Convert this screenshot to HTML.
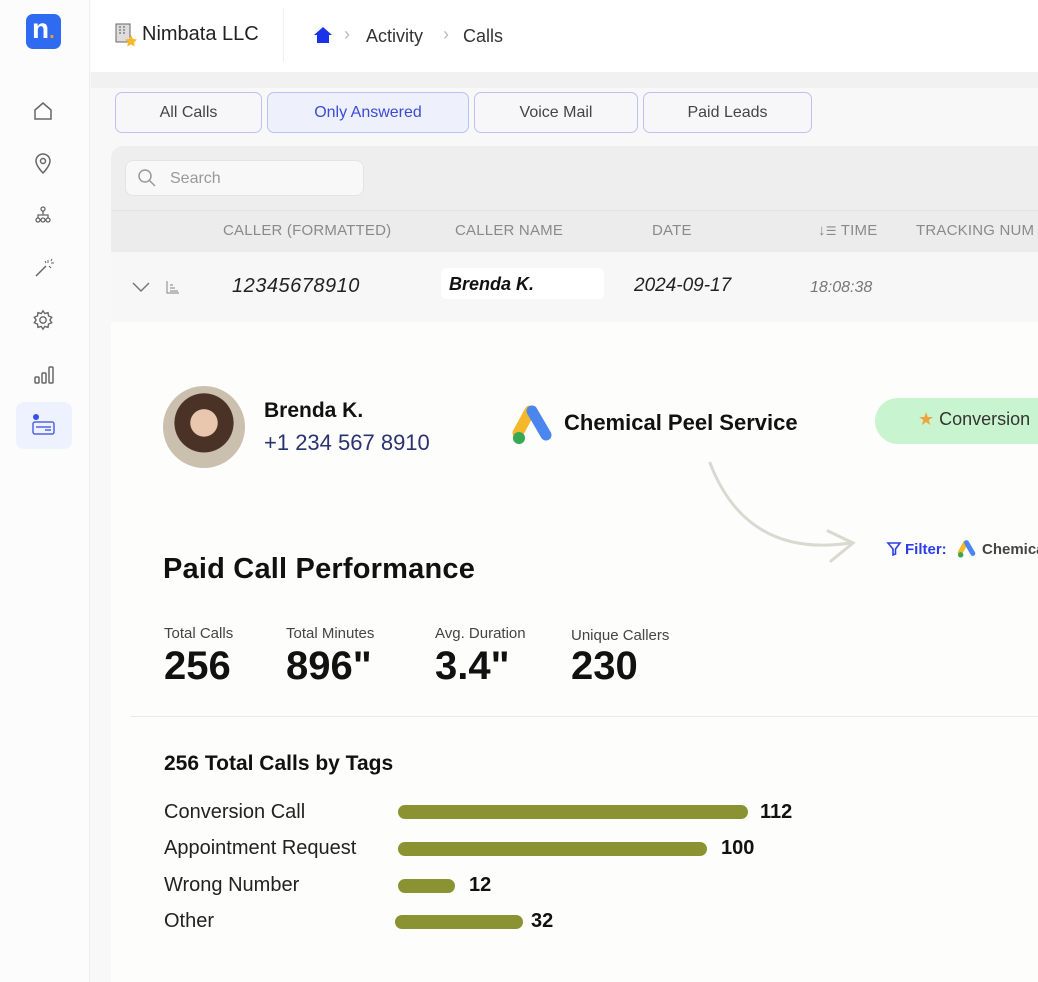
<!DOCTYPE html>
<html><head><meta charset="utf-8"><style>
*{margin:0;padding:0;box-sizing:border-box}
body{width:1038px;height:982px;overflow:hidden;background:#f8f8f8;font-family:"Liberation Sans",sans-serif;position:relative;color:#111}
.a{position:absolute;white-space:nowrap}
.tab{position:absolute;top:92px;height:41px;border:1.5px solid #b9c3ee;border-radius:7px;background:#f7f7f9;font-size:16px;color:#444;display:flex;align-items:center;justify-content:center}
.th{position:absolute;top:222px;font-size:15px;color:#8a8a8a;letter-spacing:.2px;white-space:nowrap}
.bar{position:absolute;height:14px;border-radius:7px;background:#8a9232}
.lbl{position:absolute;font-size:20px;color:#222;white-space:nowrap}
.num{position:absolute;font-size:20px;font-weight:bold;color:#111}
.sl{position:absolute;top:625px;font-size:15px;color:#444;white-space:nowrap}
.sv{position:absolute;top:644px;font-size:40px;font-weight:bold;color:#111}
svg.i{position:absolute}
</style></head><body>
<div class="a" style="left:0;top:0;width:90px;height:982px;background:#fcfcfc;border-right:1px solid #eee"></div>
<div class="a" style="left:26px;top:14px;width:35px;height:35px;background:#2f6bf0;border-radius:7px;color:#fff;font-weight:bold;font-size:28px;line-height:30px;padding-left:6px">n<span style="color:#f39a2b;font-size:20px">.</span></div>
<svg class="i" style="left:32px;top:100px" width="22" height="22" viewBox="0 0 22 22" fill="none" stroke="#666" stroke-width="1.5"><path d="M3 10L11 3l8 7v9H3z"/></svg>
<svg class="i" style="left:33px;top:151px" width="20" height="24" viewBox="0 0 20 24" fill="none" stroke="#666" stroke-width="1.5"><path d="M10 22s-7-7-7-12a7 7 0 0114 0c0 5-7 12-7 12z"/><circle cx="10" cy="10" r="2.5"/></svg>
<svg class="i" style="left:35px;top:206px" width="16" height="18" viewBox="0 0 16 18" fill="none" stroke="#666" stroke-width="1.3"><circle cx="8" cy="3" r="2"/><circle cx="3" cy="14" r="2"/><circle cx="8" cy="14" r="2"/><circle cx="13" cy="14" r="2"/><path d="M8 5v4M3 12V9h10v3"/></svg>
<svg class="i" style="left:33px;top:257px" width="22" height="22" viewBox="0 0 22 22" fill="none" stroke="#666" stroke-width="1.5"><path d="M3 19L13 9"/><path d="M15 3v3M18 6h3M16 9l2 2M12 4l1 2M19 2l-1 2" stroke-width="1"/></svg>
<svg class="i" style="left:32px;top:309px" width="22" height="22" viewBox="0 0 24 24" fill="none" stroke="#666" stroke-width="1.5"><circle cx="12" cy="12" r="3.5"/><path d="M12 2l2 3 3.5-1 .5 3.5 3.5 1.5-2 3 2 3-3.5 1.5-.5 3.5-3.5-1-2 3-2-3-3.5 1-.5-3.5L2.5 15l2-3-2-3L6 7.5 6.5 4 10 5z"/></svg>
<svg class="i" style="left:33px;top:363px" width="22" height="22" viewBox="0 0 22 22" fill="none" stroke="#666" stroke-width="1.5"><rect x="2" y="14" width="4" height="6" rx="1"/><rect x="9" y="10" width="4" height="10" rx="1"/><rect x="16" y="4" width="4" height="16" rx="1"/></svg>
<div class="a" style="left:16px;top:402px;width:56px;height:47px;background:#eef2fe;border-radius:8px"></div>
<svg class="i" style="left:31px;top:413px" width="26" height="24" viewBox="0 0 26 24" fill="none" stroke="#5062e8" stroke-width="1.5"><circle cx="5" cy="4" r="3" fill="#3c4fe6" stroke="none"/><rect x="2" y="9" width="21" height="12" rx="2"/><path d="M5 14h15M14 17h6"/></svg>
<div class="a" style="left:91px;top:0;width:947px;height:72px;background:#fff"></div>
<svg class="i" style="left:114px;top:23px" width="24" height="24" viewBox="0 0 24 24"><rect x="2" y="1" width="14" height="18" fill="#ddd" stroke="#666"/><path d="M5 4h2M9 4h2M5 7h2M9 7h2M5 10h2M9 10h2" stroke="#555"/><path d="M17 12l2 4 4 .5-3 3 .8 4-3.8-2-3.8 2 .8-4-3-3 4-.5z" fill="#f5b82e"/></svg>
<div class="a" style="left:142px;top:23px;font-size:20px;color:#222">Nimbata LLC</div>
<div class="a" style="left:283px;top:8px;width:1px;height:54px;background:#eee"></div>
<svg class="i" style="left:313px;top:26px" width="20" height="18" viewBox="0 0 20 18"><path d="M10 1L1 9h3v8h12V9h3z" fill="#1a32e8"/></svg>
<div class="a" style="left:344px;top:24px;font-size:18px;color:#bbb">›</div>
<div class="a" style="left:366px;top:26px;font-size:18px;color:#333">Activity</div>
<div class="a" style="left:443px;top:24px;font-size:18px;color:#bbb">›</div>
<div class="a" style="left:463px;top:26px;font-size:18px;color:#333">Calls</div>
<div class="a" style="left:91px;top:72px;width:947px;height:16px;background:#f1f1f1"></div>
<div class="tab" style="left:115px;width:147px">All Calls</div>
<div class="tab" style="left:267px;width:202px;background:#eef1fb;color:#3a4bd6">Only Answered</div>
<div class="tab" style="left:474px;width:164px">Voice Mail</div>
<div class="tab" style="left:643px;width:169px">Paid Leads</div>
<div class="a" style="left:111px;top:146px;width:927px;height:64px;background:#eeeeee;border-radius:12px 0 0 0"></div>
<div class="a" style="left:125px;top:160px;width:239px;height:36px;background:#f8f8f8;border:1px solid #e4e4e4;border-radius:8px"></div>
<svg class="i" style="left:137px;top:168px" width="20" height="20" viewBox="0 0 20 20" fill="none" stroke="#999" stroke-width="1.5"><circle cx="8" cy="8" r="6"/><path d="M12.5 12.5L18 18"/></svg>
<div class="a" style="left:170px;top:170px;font-size:16px;color:#999">Search</div>
<div class="a" style="left:111px;top:210px;width:927px;height:42px;background:#ececec;border-top:1px solid #e2e2e2"></div>
<div class="th" style="left:223px">CALLER (FORMATTED)</div>
<div class="th" style="left:455px">CALLER NAME</div>
<div class="th" style="left:652px">DATE</div>
<div class="th" style="left:818px">↓<span style="font-size:12px">☰</span> TIME</div>
<div class="th" style="left:916px">TRACKING NUM</div>
<div class="a" style="left:111px;top:252px;width:927px;height:70px;background:#f7f7f7"></div>
<svg class="i" style="left:131px;top:281px" width="20" height="12" viewBox="0 0 20 12" fill="none" stroke="#777" stroke-width="1.5"><path d="M2 2l8 8 8-8"/></svg>
<svg class="i" style="left:165px;top:279px" width="16" height="16" viewBox="0 0 16 16" fill="none" stroke="#999" stroke-width="1.2"><path d="M2 2v12h12M5 6h3M5 9h5M5 12h8"/></svg>
<div class="a" style="left:232px;top:275px;font-size:20px;font-style:italic;color:#222;letter-spacing:.5px">12345678910</div>
<div class="a" style="left:441px;top:268px;width:163px;height:31px;background:#fff;border-radius:5px"></div>
<div class="a" style="left:449px;top:274px;font-size:18px;font-style:italic;font-weight:bold;color:#111">Brenda K.</div>
<div class="a" style="left:634px;top:275px;font-size:19px;font-style:italic;color:#222">2024-09-17</div>
<div class="a" style="left:810px;top:279px;font-size:16px;font-style:italic;color:#777">18:08:38</div>
<div class="a" style="left:111px;top:322px;width:927px;height:660px;background:#fdfdfc"></div>
<div class="a" style="left:163px;top:386px;width:82px;height:82px;border-radius:50%;background:radial-gradient(circle at 50% 45%,#e9c7ae 0 22%,#4a3226 23% 48%,#cbbfae 49%)"></div>
<div class="a" style="left:264px;top:399px;font-size:21px;font-weight:bold;color:#111">Brenda K.</div>
<div class="a" style="left:264px;top:430px;font-size:22px;color:#2a3270">+1 234 567 8910</div>
<svg class="i" style="left:512px;top:405px" width="42" height="40" viewBox="0 0 42 40"><path d="M18 6L6 28" stroke="#f4b92a" stroke-width="11" stroke-linecap="round"/><path d="M20 6l14 24" stroke="#4a86ee" stroke-width="11" stroke-linecap="round"/><circle cx="7" cy="33" r="6" fill="#34a853"/></svg>
<div class="a" style="left:564px;top:410px;font-size:22px;font-weight:bold;color:#111">Chemical Peel Service</div>
<div class="a" style="left:875px;top:398px;width:200px;height:46px;border-radius:23px;background:#c8f5cf"></div>
<div class="a" style="left:918px;top:409px;font-size:18px;color:#333"><span style="color:#f0a33a">★</span> Conversion</div>
<svg class="i" style="left:700px;top:455px" width="170" height="115" viewBox="0 0 170 115" fill="none" stroke="#d9d9d0" stroke-width="3" stroke-linecap="round"><path d="M10 8C30 60 70 100 150 88"/><path d="M128 76l25 12-22 18"/></svg>
<svg class="i" style="left:886px;top:541px" width="16" height="16" viewBox="0 0 16 16" fill="none" stroke="#2b3ee6" stroke-width="1.6"><path d="M2 2h12L9.5 8v5L7 14V8z"/></svg>
<div class="a" style="left:905px;top:541px;font-size:15px;font-weight:bold;color:#2b3ee6">Filter:</div>
<svg class="i" style="left:957px;top:540px" width="20" height="18" viewBox="0 0 42 40"><path d="M18 6L6 28" stroke="#f4b92a" stroke-width="11" stroke-linecap="round"/><path d="M20 6l14 24" stroke="#4a86ee" stroke-width="11" stroke-linecap="round"/><circle cx="7" cy="33" r="6" fill="#34a853"/></svg>
<div class="a" style="left:982px;top:541px;font-size:15px;font-weight:bold;color:#444">Chemical</div>
<div class="a" style="left:163px;top:553px;font-size:29px;font-weight:bold;color:#111;letter-spacing:.2px">Paid Call Performance</div>
<div class="sl" style="left:164px">Total Calls</div>
<div class="sl" style="left:286px">Total Minutes</div>
<div class="sl" style="left:435px">Avg. Duration</div>
<div class="sl" style="left:571px;top:627px">Unique Callers</div>
<div class="sv" style="left:164px">256</div>
<div class="sv" style="left:286px">896"</div>
<div class="sv" style="left:435px">3.4"</div>
<div class="sv" style="left:571px">230</div>
<div class="a" style="left:130px;top:716px;width:908px;height:1px;background:#eaeaea"></div>
<div class="a" style="left:164px;top:752px;font-size:21px;font-weight:bold;color:#111">256 Total Calls by Tags</div>
<div class="lbl" style="left:164px;top:801px">Conversion Call</div>
<div class="lbl" style="left:164px;top:837px">Appointment Request</div>
<div class="lbl" style="left:164px;top:874px">Wrong Number</div>
<div class="lbl" style="left:164px;top:910px">Other</div>
<div class="bar" style="left:398px;top:805px;width:350px"></div>
<div class="bar" style="left:398px;top:842px;width:309px"></div>
<div class="bar" style="left:398px;top:879px;width:57px"></div>
<div class="bar" style="left:395px;top:915px;width:128px"></div>
<div class="num" style="left:760px;top:801px">112</div>
<div class="num" style="left:721px;top:837px">100</div>
<div class="num" style="left:469px;top:874px">12</div>
<div class="num" style="left:531px;top:910px">32</div>
</body></html>
